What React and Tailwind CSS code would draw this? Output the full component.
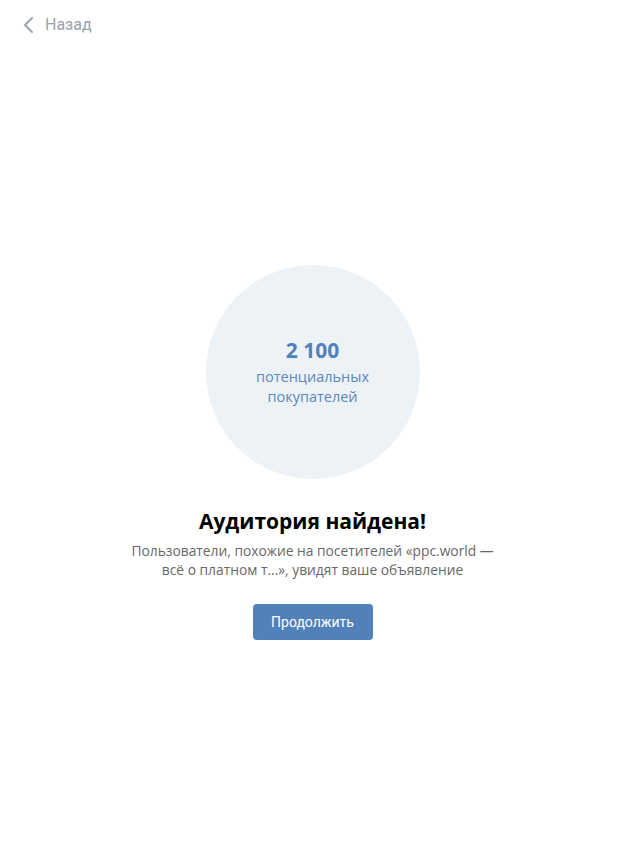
import React from 'react';

const App = () => {
  return (
    <div className="min-h-screen w-full bg-white" style={{ fontFamily: '"Open Sans", sans-serif' }}>
      {/* Шапка */}
      <div className="flex items-center h-[50px] pl-[22px]">
        <button className="flex items-center gap-[10px] text-[#99a2ad]">
          <svg width="13" height="18" viewBox="0 0 13 18" fill="none">
            <path d="M10 2 L3 9 L10 16" stroke="#a0a8b4" strokeWidth="2.2" strokeLinecap="round" strokeLinejoin="round" />
          </svg>
          <span className="text-[16px] leading-none" style={{ fontFamily: 'Roboto, sans-serif' }}>Назад</span>
        </button>
      </div>

      {/* Контент */}
      <div className="flex flex-col items-center pt-[215px]">
        <div className="w-[214px] h-[214px] rounded-full bg-[#edf2f7] flex flex-col items-center justify-center">
          <div className="text-[21px] font-bold text-[#5181b8] leading-[28px] mt-[-2px]">2 100</div>
          <div className="text-[14.5px] text-[#5b88bd] leading-[20px] text-center mt-[3px]">
            потенциальных
            <br />
            покупателей
          </div>
        </div>
        <h1 className="mt-[27px] text-[21px] font-bold text-black leading-[30px]">Аудитория найдена!</h1>
        <p className="mt-[5px] text-[13.8px] text-[#686868] leading-[19px] text-center">
          Пользователи, похожие на посетителей «ppc.world —
          <br />
          всё о платном т...», увидят ваше объявление
        </p>
        <button
          className="mt-[25px] w-[120px] h-[36px] rounded-[4px] bg-[#5181b8] text-white text-[14px]"
          style={{ fontFamily: 'Roboto, sans-serif' }}
        >
          Продолжить
        </button>
      </div>
    </div>
  );
};

export default App;
